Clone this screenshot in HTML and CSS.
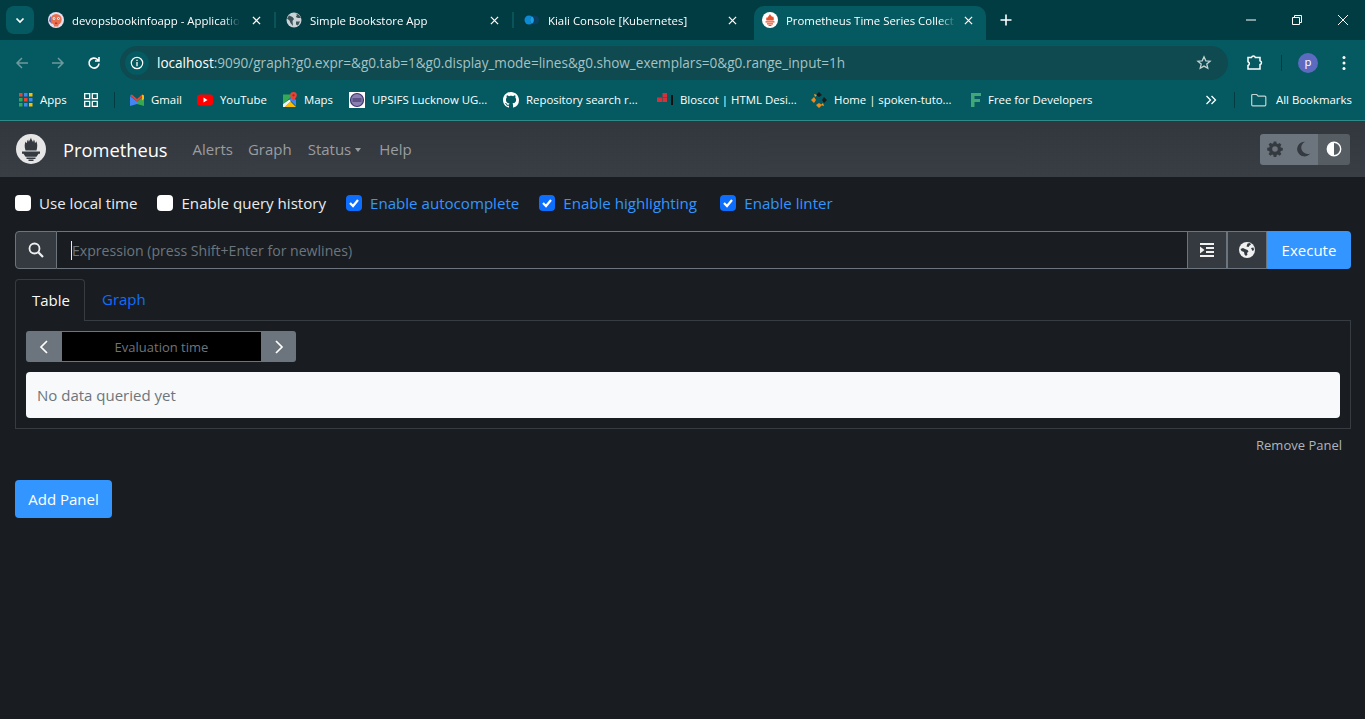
FILE: index.html
```html
<!DOCTYPE html>
<html>

<head>
    <meta name="viewport" content="width=device-width">
    <link rel="stylesheet" href="styles.css">
    <title>Prometheus Time Series Collection and Processing Server</title>
</head>

<body>
    <div class="browser">
        <div class="tabstrip">
            <div class="tab-search">
                <svg width="12" height="12" viewBox="0 0 12 12"><path d="M2.500 4.500 6 8l3.500-3.500" fill="none" stroke="#fff" stroke-width="1.700"/></svg>
            </div>
            <div class="tab">
                <svg class="favicon" viewBox="0 0 16 16"><circle cx="8" cy="8" r="8" fill="#e4e0f0"/><path d="M1 9a7 7 0 0 1 2-5l1 8z" fill="#6f64b0"/><circle cx="8.200" cy="7.500" r="5.500" fill="#e8704e"/><circle cx="6" cy="6.500" r="1.300" fill="#fff"/><circle cx="10.400" cy="6.500" r="1.300" fill="#fff"/><path d="M5.700 6.200h.8v.8h-.8zM10.100 6.200h.8v.8h-.8z" fill="#333"/><path d="M5.500 10h5.400l-.6 4.500H6z" fill="#e8704e"/><path d="M7 10.500h2.200v1.500H7z" fill="#a93f29"/></svg>
                <span class="tab-title">devopsbookinfoapp - Applicatio</span>
                <svg class="tab-close" viewBox="0 0 10 10"><path d="m1 1 8 8M9 1 1 9" stroke="#fff" stroke-width="1.400"/></svg>
            </div>
            <div class="tab-sep"></div>
            <div class="tab">
                <svg class="favicon" viewBox="0 0 16 16"><circle cx="8" cy="8" r="7.500" fill="#c9d2d4"/><path d="M3 3.500 6.500 5 8 7 6.500 9 7 14 4.500 11 3.500 8.500 1 6.500zM9.500 1.200 11 3 9.800 5 12 6 15 6 13 3zM10 9.500h4l-2 4-2-1z" fill="#3c5155"/></svg>
                <span class="tab-title">Simple Bookstore App</span>
                <svg class="tab-close" viewBox="0 0 10 10"><path d="m1 1 8 8M9 1 1 9" stroke="#fff" stroke-width="1.400"/></svg>
            </div>
            <div class="tab-sep"></div>
            <div class="tab">
                <svg class="favicon" viewBox="0 0 16 16"><circle cx="5" cy="8" r="4.500" fill="#0b8ad6"/><circle cx="10.500" cy="8" r="4.500" fill="#0b3f60"/><path d="M8 4.300a4.500 4.500 0 0 1 0 7.400 4.500 4.500 0 0 1 0-7.400z" fill="#19a0e8"/></svg>
                <span class="tab-title">Kiali Console [Kubernetes]</span>
                <svg class="tab-close" viewBox="0 0 10 10"><path d="m1 1 8 8M9 1 1 9" stroke="#fff" stroke-width="1.400"/></svg>
            </div>
            <div class="tab tab-active">
                <svg class="favicon" viewBox="0 0 16 16"><circle cx="8" cy="8" r="8" fill="#fff"/><path d="M8 2c.4 1.500 2 2 2.300 3.200.4-.5.500-1 .500-1.300 1 1.300 1.400 3 .7 4.600H4.500c-.7-1.500-.2-2.800.7-3.800 0 .7.200 1.100.6 1.400C5.600 4.500 7.500 3.600 8 2zM3.500 9.200h9v1.300h-9zM5 11.200h6v1.200H5zM6.500 13h3v1h-3z" fill="#e6522c"/></svg>
                <span class="tab-title">Prometheus Time Series Collect</span>
                <svg class="tab-close" viewBox="0 0 10 10"><path d="m1 1 8 8M9 1 1 9" stroke="#fff" stroke-width="1.400"/></svg>
            </div>
            <svg class="new-tab" viewBox="0 0 12 12"><path d="M6 .5v11M.5 6h11" stroke="#fff" stroke-width="1.600"/></svg>
            <div class="window-controls">
                <svg viewBox="0 0 12 12"><path d="M1 6h10" stroke="#fff"/></svg>
                <svg viewBox="0 0 12 12"><path d="M1.500 3.500h7v7h-7zM3.500 3.500v-2h7v7h-2" fill="none" stroke="#fff"/></svg>
                <svg viewBox="0 0 12 12"><path d="m1 1 10 10M11 1 1 11" stroke="#fff"/></svg>
            </div>
        </div>

        <div class="toolbar">
            <svg class="nav-icon" viewBox="0 0 16 16"><path d="M14 8H3M8 3 3 8l5 5" fill="none" stroke="#6d9a9d" stroke-width="1.500"/></svg>
            <svg class="nav-icon" viewBox="0 0 16 16"><path d="M2 8h11M8 3l5 5-5 5" fill="none" stroke="#6d9a9d" stroke-width="1.500"/></svg>
            <svg class="nav-icon" viewBox="0 0 16 16"><path d="M13 8.500A5 5 0 1 1 11.500 4.500L13 6M13 2v4H9" fill="none" stroke="#fff" stroke-width="1.600"/></svg>
            <div class="omnibox">
                <span class="site-info">
                    <svg width="14" height="14" viewBox="0 0 14 14"><circle cx="7" cy="7" r="5.700" fill="none" stroke="#fff" stroke-width="1.200"/><path d="M7 6v4.200M7 3.700v1.300" stroke="#fff" stroke-width="1.300"/></svg>
                </span>
                <span class="url"><span class="url-host">localhost</span>:9090/graph?g0.expr=&amp;g0.tab=1&amp;g0.display_mode=lines&amp;g0.show_exemplars=0&amp;g0.range_input=1h</span>
                <svg class="star" viewBox="0 0 16 16"><path d="m8 1.800 1.800 4 4.300.4-3.300 2.900 1 4.200L8 11.100l-3.800 2.200 1-4.200-3.300-2.900 4.300-.4z" fill="none" stroke="#c3d2d3" stroke-width="1.300"/></svg>
            </div>
            <svg class="ext-icon" viewBox="0 0 18 18"><path d="M2 3.500h3.500a2 2 0 0 1 3.800 0H14v3.300a1.900 1.900 0 0 1 0 3.700V15H2v-3.500a2 2 0 0 0 0-3.800z" fill="none" stroke="#fff" stroke-width="1.500"/></svg>
            <div class="toolbar-sep"></div>
            <div class="avatar">p</div>
            <svg class="menu-icon" viewBox="0 0 4 16"><circle cx="2" cy="2.500" r="1.500" fill="#fff"/><circle cx="2" cy="8" r="1.500" fill="#fff"/><circle cx="2" cy="13.500" r="1.500" fill="#fff"/></svg>
        </div>

        <div class="bookmarks">
            <a class="bm bm-apps">
                <svg class="bm-icon" viewBox="0 0 14 14"><path d="M0 0h3.500v3.500H0z" fill="#ea4335"/><path d="M5 0h3.500v3.500H5z" fill="#4285f4"/><path d="M10 0h3.500v3.500H10z" fill="#fbbc05"/><path d="M0 5h3.500v3.500H0z" fill="#34a853"/><path d="M5 5h3.500v3.500H5z" fill="#ea4335"/><path d="M10 5h3.500v3.500H10z" fill="#4285f4"/><path d="M0 10h3.500v3.500H0z" fill="#34a853"/><path d="M5 10h3.500v3.500H5z" fill="#4285f4"/><path d="M10 10h3.500v3.500H10z" fill="#fbbc05"/></svg>
                Apps
            </a>
            <svg class="bm-grid" viewBox="0 0 14 14"><path d="M.7.700h5v5h-5zM8.300.700h5v5h-5zM.7 8.300h5v5h-5zM8.300 8.300h5v5h-5z" fill="none" stroke="#fff" stroke-width="1.300"/></svg>
            <div class="bm-sep"></div>
            <a class="bm bm-gmail">
                <svg class="bm-icon" viewBox="0 0 16 14"><path d="M1 13V3l7 5.500V11z" fill="#4285f4"/><path d="M15 13V3L8 8.500V11z" fill="#34a853"/><path d="M1 2.500 3 1.500 8 6l5-4.500 2 1-7 6z" fill="#ea4335"/><path d="M13 1.500 15 2.500V6l-2 1.500z" fill="#fbbc05"/></svg>
                Gmail
            </a>
            <a class="bm bm-youtube">
                <svg class="bm-icon" viewBox="0 0 16 12"><rect width="16" height="11" y=".5" rx="3" fill="#f00"/><path d="m6.500 3.500 4 2.500-4 2.500z" fill="#fff"/></svg>
                YouTube
            </a>
            <a class="bm bm-maps">
                <svg class="bm-icon" viewBox="0 0 16 16"><path d="M1 2.500h9v2L1 12z" fill="#34a853"/><path d="M3 15 8.500 9.500 14 15z" fill="#fbbc05"/><path d="M1 12v3h2l6-6-1.500-1.500z" fill="#f1f3f4"/><path d="M10 4.500 7.500 7.500 14 14V8z" fill="#4285f4"/><path d="M11.500 0a3.300 3.300 0 0 1 3.300 3.300c0 2.300-2.500 3.700-3.300 6.200-.8-2.500-3.300-3.900-3.300-6.200A3.300 3.300 0 0 1 11.500 0z" fill="#ea4335"/><circle cx="11.500" cy="3.300" r="1.100" fill="#a52714"/></svg>
                Maps
            </a>
            <a class="bm bm-upsifs">
                <svg class="bm-icon" viewBox="0 0 16 16"><rect width="16" height="16" fill="#fff"/><circle cx="8" cy="8" r="6.500" fill="#8a7fb0" stroke="#3f356e" stroke-width="1.200"/><path d="M3.500 6.500h9v1h-9zM3.500 8.500h9v1h-9z" fill="#2f2a5c"/></svg>
                UPSIFS Lucknow UG...
            </a>
            <a class="bm bm-github">
                <svg class="bm-icon" viewBox="0 0 16 16"><path fill="#fff" d="M8 0C3.580 0 0 3.580 0 8c0 3.540 2.290 6.530 5.470 7.590.4.070.55-.17.550-.38 0-.19-.01-.82-.01-1.490-2.010.37-2.530-.49-2.690-.94-.09-.23-.48-.94-.82-1.130-.28-.15-.68-.52-.01-.53.63-.01 1.080.58 1.230.82.720 1.210 1.870.87 2.330.66.070-.52.280-.87.510-1.070-1.780-.2-3.640-.89-3.640-3.950 0-.87.310-1.590.820-2.150-.08-.2-.36-1.020.08-2.120 0 0 .670-.21 2.200.82.640-.18 1.320-.27 2-.27s1.360.09 2 .27c1.530-1.040 2.200-.82 2.200-.82.440 1.100.160 1.920.080 2.120.51.560.82 1.270.82 2.150 0 3.070-1.870 3.750-3.650 3.950.29.250.54.730.54 1.480 0 1.070-.01 1.930-.01 2.200 0 .21.150.46.550.38A8.010 8.010 0 0 0 16 8c0-4.420-3.580-8-8-8z"/></svg>
                Repository search r...
            </a>
            <a class="bm bm-bloscot">
                <svg class="bm-icon" viewBox="0 0 16 16"><path d="M5.500 1h4.500v4H5.500zM0 5.500h5v4.500H0zM5.500 5.500h4.500v4.500H5.500z" fill="#d6303a"/><path d="M14 3h2v10h-2z" fill="#111"/></svg>
                Bloscot | HTML Desi...
            </a>
            <a class="bm bm-home">
                <svg class="bm-icon" viewBox="0 0 16 16"><path d="M8 0 11 3 8 5 5 3zM16 8l-3 3-2-3 2-3z" fill="#1b1b1b"/><path d="M0 8l3-3 2 3-2 3zM8 16l-3-3 3-2 3 2z" fill="#f08a1c"/><path d="m3 2 3 1-2 2zM13 14l-3-1 2-2z" fill="#f0a030"/></svg>
                Home | spoken-tuto...
            </a>
            <a class="bm bm-free">
                <svg class="bm-icon" viewBox="0 0 16 16"><path d="M3 1h10v3H6.500v3H12v3H6.500v5H3z" fill="#3fa878"/></svg>
                Free for Developers
            </a>
            <svg class="bm-more" viewBox="0 0 12 10"><path d="m1.500 1 4 4-4 4M6.500 1l4 4-4 4" fill="none" stroke="#fff" stroke-width="1.300"/></svg>
            <div class="bm-sep bm-sep-right"></div>
            <a class="bm bm-all">
                <svg class="bm-icon" viewBox="0 0 16 14"><path d="M.7 2.500a1 1 0 0 1 1-1h4l1.500 1.700h6.600a1 1 0 0 1 1 1v7.600a1 1 0 0 1-1 1H1.700a1 1 0 0 1-1-1z" fill="none" stroke="#c3d2d3" stroke-width="1.200"/></svg>
                All Bookmarks
            </a>
        </div>
    </div>

    <nav class="navbar">
        <svg class="logo" viewBox="0 0 30 30"><circle cx="15" cy="15" r="15" fill="#e6e6e6"/><path d="M15 3.500c.3 2.200 1.500 3 2 4.500.6-.9.700-1.800.7-2.500 1 1 1.300 2.500 1.200 3.700.7-.6 1.200-1.300 1.400-2 1.200 2.500 1.300 5.300.2 9.300H9.500C8.300 12.500 8.500 9.800 9.700 7.500c.2.800.6 1.400 1.300 1.800-.1-1.300.3-2.700 1.200-3.800 0 .9.200 1.600.8 2.200.3-1.500 1.500-2.500 2-4.200z" fill="#343a40"/><path d="M6 17.500h18v2.300h-1.500l-2 3H9.500l-2-3H6zM10.500 23.500h9v1.500h-9zM12.500 25.500h5v1.500h-5z" fill="#343a40"/></svg>
        <span class="brand">Prometheus</span>
        <a class="nav-link nav-alerts">Alerts</a>
        <a class="nav-link nav-graph">Graph</a>
        <a class="nav-link nav-status">Status<i class="caret"></i></a>
        <a class="nav-link">Help</a>
        <div class="theme-toggle">
            <span class="theme-btn">
                <svg width="16" height="16" viewBox="0 0 16 16"><path fill-rule="evenodd" d="M6.700.5h2.600l.4 2 1.200.5 1.700-1.100 1.800 1.800-1.100 1.700.5 1.200 2 .4v2.600l-2 .4-.5 1.200 1.100 1.700-1.800 1.800-1.700-1.100-1.200.5-.4 2H6.700l-.4-2-1.200-.5-1.700 1.100-1.800-1.800 1.100-1.700-.5-1.200-2-.4V6.800l2-.4.5-1.200-1.100-1.700 1.800-1.800 1.700 1.100 1.200-.5zM8 5.200a2.800 2.800 0 1 0 0 5.600 2.800 2.800 0 0 0 0-5.600z" fill="#343a40"/></svg>
            </span>
            <span class="theme-btn">
                <svg width="16" height="16" viewBox="0 0 16 16"><path d="M9 .8a7.300 7.300 0 1 0 5.300 11.600A6 6 0 0 1 9 .8z" fill="#343a40"/></svg>
            </span>
            <span class="theme-btn theme-btn-active">
                <svg width="16" height="16" viewBox="0 0 16 16"><circle cx="8" cy="8" r="6.700" fill="none" stroke="#fff" stroke-width="1.400"/><path d="M8 1.500a6.500 6.500 0 0 0 0 13z" fill="#fff"/></svg>
            </span>
        </div>
    </nav>

    <main class="page">
        <div class="options">
            <label class="option"><span class="check"></span>Use local time</label>
            <label class="option"><span class="check"></span>Enable query history</label>
            <label class="option option-on"><span class="check check-on"><svg viewBox="0 0 16 16"><path d="m4 8 3 3 5-6" fill="none" stroke="#fff" stroke-width="2.200"/></svg></span>Enable autocomplete</label>
            <label class="option option-on option-wide"><span class="check check-on"><svg viewBox="0 0 16 16"><path d="m4 8 3 3 5-6" fill="none" stroke="#fff" stroke-width="2.200"/></svg></span>Enable highlighting</label>
            <label class="option option-on"><span class="check check-on"><svg viewBox="0 0 16 16"><path d="m4 8 3 3 5-6" fill="none" stroke="#fff" stroke-width="2.200"/></svg></span>Enable linter</label>
        </div>

        <div class="expr-group">
            <span class="expr-addon expr-search">
                <svg width="16" height="16" viewBox="0 0 16 16"><circle cx="6.500" cy="6.500" r="5" fill="none" stroke="#f0f0f0" stroke-width="1.800"/><path d="m10.300 10.300 4.700 4.700" stroke="#f0f0f0" stroke-width="2.200"/></svg>
            </span>
            <div class="expr-input"><span class="cursor"></span>Expression (press Shift+Enter for newlines)</div>
            <span class="expr-addon expr-btn">
                <svg width="14" height="14" viewBox="0 0 14 14"><path d="M0 0h14v2H0zM6 4h8v2H6zM6 8h8v2H6zM0 12h14v2H0zM0 3.500 4.500 7 0 10.500z" fill="#f0f0f0"/></svg>
            </span>
            <span class="expr-addon expr-btn">
                <svg width="16" height="16" viewBox="0 0 16 16"><circle cx="8" cy="8" r="8" fill="#f0f0f0"/><path d="M8.500 1.500 11 1l1 1.500-1.500 1-1 1.500-2-.5zM1.500 7 4 6l2 1 2.500 1 1 1.500L8 11l.5 1.500L7 14 5.500 12.500 5 10 2.500 9zM12 6l2.500-.5.500 2.500-1.500 1z" fill="#343a40"/></svg>
            </span>
            <button class="execute">Execute</button>
        </div>

        <div class="panel">
            <div class="panel-tabs">
                <a class="panel-tab panel-tab-active">Table</a>
                <a class="panel-tab">Graph</a>
            </div>
            <div class="panel-body">
                <div class="eval-group">
                    <span class="eval-btn"><svg width="10" height="16" viewBox="0 0 10 16"><path d="M8 2 2 8l6 6" fill="none" stroke="#fff" stroke-width="1.700"/></svg></span>
                    <div class="eval-input">Evaluation time</div>
                    <span class="eval-btn"><svg width="10" height="16" viewBox="0 0 10 16"><path d="m2 2 6 6-6 6" fill="none" stroke="#fff" stroke-width="1.700"/></svg></span>
                </div>
                <div class="no-data">No data queried yet</div>
            </div>
            <div class="panel-foot"><a class="remove-panel">Remove Panel</a></div>
        </div>

        <button class="add-panel">Add Panel</button>
    </main>
</body>

</html>
```
FILE: styles.css
```css
html,
body {
    height: 100%;
}

body {
    margin: 0;
    background-color: #191d21;
    font-family: "Open Sans", "Liberation Sans", sans-serif;
    font-size: 15px;
    color: #e9ecef;
    overflow: hidden;
}

svg {
    display: block;
    flex: none;
}

/* browser chrome */
.browser {
    height: 120px;
    background-color: #045a60;
    font-size: 11.4px;
    color: #fff;
}

.tabstrip {
    display: flex;
    align-items: flex-end;
    height: 40px;
    padding-left: 6px;
    background-color: #023c43;
}

.tab-search {
    display: flex;
    align-items: center;
    justify-content: center;
    width: 28px;
    height: 28px;
    margin-bottom: 6px;
    margin-right: 4px;
    border-radius: 8px;
    background-color: #045a60;
}

.tab {
    display: flex;
    align-items: center;
    width: 236px;
    height: 34px;
    padding: 0 8px 6px 10px;
    box-sizing: border-box;
    gap: 8px;
}

.tab-sep {
    width: 2px;
    height: 16px;
    margin-bottom: 12px;
    background-color: #0a5359;
}

.tab-active {
    width: 232px;
    margin-left: 4px;
    padding-left: 8px;
    border-radius: 10px 10px 0 0;
    background-color: #045a60;
}

.favicon {
    width: 16px;
    height: 16px;
}

.tab-title {
    flex: 1;
    overflow: hidden;
    white-space: nowrap;
    -webkit-mask-image: linear-gradient(to right, #000 90%, transparent);
}

.tab-close {
    width: 9px;
    height: 9px;
    margin: 0 5px 0 4px;
}

.tab-active .tab-close {
    margin-left: 0;
}

.new-tab {
    width: 12px;
    height: 12px;
    margin: 0 0 14px 14px;
}

.window-controls {
    display: flex;
    gap: 34px;
    margin-left: auto;
    margin-right: 16px;
    margin-bottom: 14px;
}

.window-controls svg {
    width: 12px;
    height: 12px;
}

.toolbar {
    display: flex;
    align-items: center;
    height: 40px;
    padding: 6px 14px 0;
    box-sizing: border-box;
}

.nav-icon {
    width: 16px;
    height: 16px;
    margin-right: 20px;
}

.omnibox {
    display: flex;
    align-items: center;
    width: 1108px;
    height: 34px;
    margin-left: -2px;
    padding-left: 5px;
    box-sizing: border-box;
    border-radius: 17px;
    background-color: #0e4a50;
    font-size: 13.55px;
    color: #a6c2c4;
}

.site-info {
    display: flex;
    align-items: center;
    justify-content: center;
    width: 24px;
    height: 24px;
    margin-right: 8px;
    border-radius: 50%;
    background-color: #045a60;
}

.url-host {
    color: #fff;
}

.url {
    flex: 1;
    white-space: nowrap;
}

.star {
    width: 16px;
    height: 16px;
    margin-right: 16px;
}

.ext-icon {
    width: 18px;
    height: 18px;
    margin-left: 18px;
}

.toolbar-sep {
    width: 1px;
    height: 16px;
    margin: 0 16px 0 17px;
    background-color: #023c43;
}

.avatar {
    width: 20px;
    height: 20px;
    border-radius: 50%;
    background-color: #5c6bc0;
    text-align: center;
    line-height: 18px;
}

.menu-icon {
    width: 4px;
    height: 16px;
    margin-left: 24px;
}

.bookmarks {
    display: flex;
    align-items: center;
    height: 40px;
    padding: 0 0 2px 19px;
    box-sizing: border-box;
}

.bm {
    display: flex;
    align-items: center;
    gap: 7px;
    white-space: nowrap;
}

.bm-icon {
    width: 16px;
    height: 16px;
    margin-top: 2px;
}

.bm-apps { width: 65px; }
.bm-apps .bm-icon { width: 14px; height: 14px; }
.bm-gmail { width: 68px; margin-left: 7px; gap: 6px; }
.bm-youtube { width: 85px; }
.bm-maps { width: 67px; gap: 6px; }
.bm-upsifs { width: 154px; }
.bm-github { width: 154px; }
.bm-bloscot { width: 154px; }
.bm-home { width: 157px; }
.bm-free { width: 124px; gap: 4px; }

.bm-grid {
    width: 14px;
    height: 14px;
    margin-top: 2px;
}

.bm-sep {
    width: 1px;
    height: 16px;
    margin: 2px 7px 0 16px;
    background-color: #023c43;
}

.bm-more {
    width: 12px;
    height: 10px;
    margin: 2px 0 0 113px;
}

.bm-sep-right {
    margin: 2px 16px 0 17px;
}

.bm-all {
    gap: 9px;
}

/* prometheus navbar */
.navbar {
    display: flex;
    align-items: center;
    height: 56px;
    padding: 0 15px 0 16px;
    border-top: 1px solid #2f8a8a;
    background-color: #343a40;
    background-image: linear-gradient(180deg, #32373d, #393e45);
    color: #9a9da0;
    font-size: 15px;
}

.logo {
    width: 30px;
    height: 30px;
    margin-right: 17px;
}

.brand {
    margin-right: 25px;
    font-size: 18.3px;
    color: #fff;
}

.nav-alerts {
    margin-right: 15px;
}

.nav-graph {
    margin-right: 16px;
}

.nav-status {
    margin-right: 18px;
}

.caret {
    display: inline-block;
    margin-left: 4px;
    vertical-align: 3px;
    border-top: 4px solid #9a9da0;
    border-left: 3.500px solid transparent;
    border-right: 3.500px solid transparent;
}

.theme-toggle {
    display: flex;
    margin-left: auto;
}

.theme-btn {
    display: flex;
    align-items: center;
    justify-content: center;
    width: 29px;
    height: 31px;
    background-color: #6c757d;
}

.theme-btn:first-child {
    border-radius: 3px 0 0 3px;
}

.theme-btn-active {
    width: 32px;
    border-radius: 0 3px 3px 0;
    background-color: #565e64;
}

/* page */
.page {
    padding: 14px 14px 15px 15px;
}

.options {
    display: flex;
    align-items: center;
    gap: 20px;
    height: 24px;
    margin-bottom: 16px;
    font-size: 15.100px;
}

.option {
    display: flex;
    align-items: center;
    gap: 8px;
}

.option-on {
    color: #3395ff;
}

.option-wide {
    width: 161px;
}

.check {
    width: 16px;
    height: 16px;
    border-radius: 4px;
    background-color: #fff;
}

.check-on {
    background-color: #0d6efd;
}

.expr-group {
    display: flex;
    height: 38px;
    box-sizing: border-box;
}

.expr-addon {
    display: flex;
    align-items: center;
    justify-content: center;
    box-sizing: border-box;
    border: 1px solid #6c757d;
    border-left: 0;
    background-color: #343a40;
}

.expr-search {
    width: 42px;
    border-left: 1px solid #6c757d;
    border-radius: 4px 0 0 4px;
}

.expr-btn {
    width: 40px;
    border-left: 1px solid #6c757d;
}

.expr-input {
    display: flex;
    align-items: center;
    flex: 1;
    box-sizing: border-box;
    padding-left: 14px;
    border-top: 1px solid #6c757d;
    border-bottom: 1px solid #6c757d;
    color: #6c757d;
    font-size: 14.100px;
}

.cursor {
    width: 1px;
    height: 19px;
    background-color: #e9ecef;
}

.execute {
    width: 84px;
    border: 0;
    border-radius: 0 4px 4px 0;
    background-color: #3395ff;
    color: #fff;
    font: inherit;
}

.panel {
    margin-top: 10px;
}

.panel-tabs {
    display: flex;
    height: 41px;
}

.panel-tab {
    display: flex;
    align-items: center;
    padding: 0 17px 1px;
    color: #0d6efd;
}

.panel-tab-active {
    width: 70px;
    box-sizing: border-box;
    padding: 0 0 1px 16px;
    margin-bottom: -1px;
    border: 1px solid #373c42;
    border-bottom: 0;
    border-radius: 4px 4px 0 0;
    background-color: #191d21;
    color: #f8f9fa;
}

.panel-body {
    display: flex;
    flex-direction: column;
    gap: 10px;
    padding: 10px;
    border: 1px solid #373c42;
}

.eval-group {
    display: flex;
    width: 270px;
    height: 31px;
}

.eval-btn {
    display: flex;
    align-items: center;
    justify-content: center;
    width: 35px;
    background-color: #6c757d;
}

.eval-btn:first-child {
    width: 36px;
    border-radius: 3px 0 0 3px;
}

.eval-btn:last-child {
    border-radius: 0 3px 3px 0;
}

.eval-input {
    flex: 1;
    box-sizing: border-box;
    border-top: 1px solid #6c757d;
    border-bottom: 1px solid #6c757d;
    background-color: #000;
    color: #6c757d;
    font-size: 13px;
    line-height: 31px;
    text-align: center;
}

.no-data {
    height: 46px;
    padding-left: 11px;
    border-radius: 4px;
    background-color: #f8f9fa;
    color: #6c757d;
    line-height: 46px;
}

.panel-foot {
    display: flex;
    justify-content: flex-end;
    padding: 7px 9px 0;
    height: 28px;
    box-sizing: content-box;
    margin-bottom: -1px;
    font-size: 13px;
    color: #adb5bd;
}

.add-panel {
    display: block;
    width: 97px;
    height: 38px;
    margin-top: 17px;
    border: 0;
    border-radius: 4px;
    background-color: #3395ff;
    color: #fff;
    font: inherit;
}
```
